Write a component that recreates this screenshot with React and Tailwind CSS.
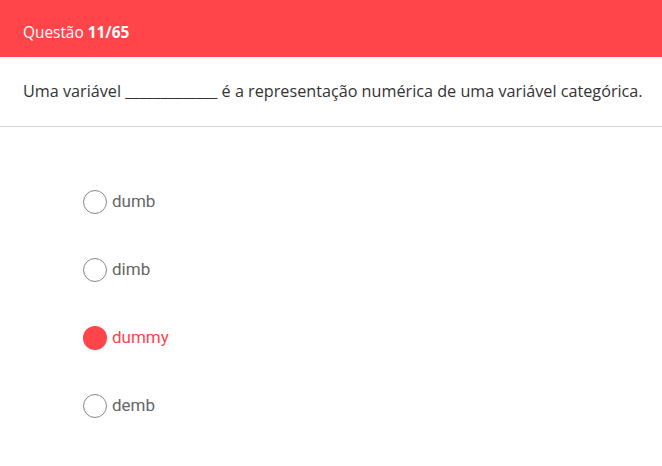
const options = ["dumb", "dimb", "dummy", "demb"];

export default function App() {
  const selected = "dummy";

  return (
    <div className="w-[662px] h-[466px] bg-white" style={{ fontFamily: '"Open Sans", "Noto Sans", sans-serif' }}>
      <div className="h-[57px] bg-[#ff444a] flex items-center pt-[9px] px-[23px] text-white text-[15.4px]">
        <span>
          Questão <span className="font-bold">11/65</span>
        </span>
      </div>
      <div className="h-[70px] flex items-center pl-[23px] border-b border-[#d4d4d4] text-[16.2px] text-[#333] whitespace-nowrap">
        Uma variável _____________ é a representação numérica de uma variável categórica.
      </div>
      <div className="pt-[63px] pl-[83px] flex flex-col gap-[44px]">
        {options.map((opt) => {
          const active = opt === selected;
          return (
            <label key={opt} className="flex items-center gap-[5px] h-[24px] cursor-pointer">
              <span
                className={
                  active
                    ? "w-[24px] h-[24px] rounded-full bg-[#ff444a]"
                    : "w-[24px] h-[24px] rounded-full border border-[#888]"
                }
              />
              <span
                className={active ? "text-[17px] text-[#ff444a]" : "text-[17px] text-[#666]"}
                style={{ fontFamily: "Roboto, sans-serif" }}
              >
                {opt}
              </span>
            </label>
          );
        })}
      </div>
    </div>
  );
}
